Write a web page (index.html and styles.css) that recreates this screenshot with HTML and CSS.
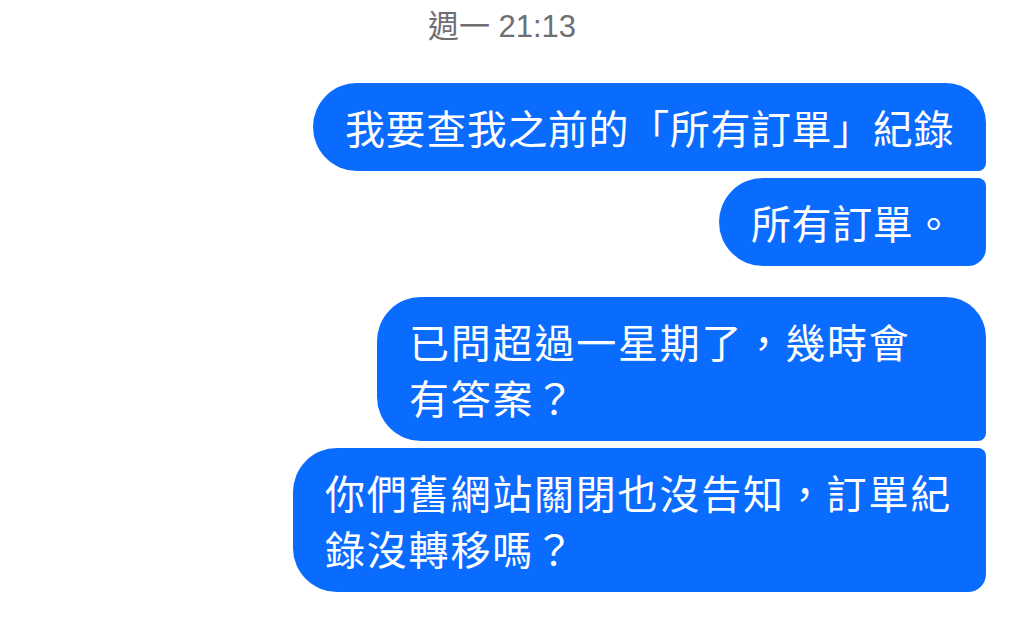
FILE: index.html
```html
<!DOCTYPE html>
<html lang="zh-Hant">
<head>
  <meta charset="UTF-8">
  <meta name="viewport" content="width=device-width, initial-scale=1.0">
  <title>Messages</title>
  <link rel="stylesheet" href="styles.css">
</head>
<body>
  <div class="timestamp">週一 21:13</div>
  <div class="chat">
    <div class="group">
      <div class="bubble first">我要查我之前的「所有訂單」紀錄</div>
      <div class="bubble last">所有訂單。</div>
    </div>
    <div class="group">
      <div class="bubble first wide">已問超過一星期了，幾時會<br>有答案？</div>
      <div class="bubble last full">你們舊網站關閉也沒告知，訂單紀<br>錄沒轉移嗎？</div>
    </div>
  </div>
</body>
</html>
```

FILE: styles.css
```css
body {
  margin: 0;
  background-color: #ffffff;
  font-family: "Noto Sans CJK TC", "Noto Sans", sans-serif;
}

.timestamp {
  padding: 7px 20px 0 0;
  height: 40px;
  line-height: 40px;
  text-align: center;
  font-family: "Liberation Sans", "Noto Sans CJK TC", sans-serif;
  font-size: 31px;
  color: #6e6e73;
}

.chat {
  display: flex;
  flex-direction: column;
  align-items: flex-end;
  gap: 31px;
  padding: 36px 38px 0 0;
}

.group {
  display: flex;
  flex-direction: column;
  align-items: flex-end;
  gap: 7px;
}

.bubble {
  background-color: #0a6bff;
  color: #ffffff;
  font-size: 40px;
  line-height: 56px;
  letter-spacing: 0.6px;
  padding: 16px 32px;
  white-space: nowrap;
}

.bubble.first {
  border-radius: 44px 40px 8px 44px;
}

.bubble.last {
  border-radius: 44px 8px 18px 44px;
}

.bubble.wide {
  width: 609px;
  box-sizing: border-box;
  letter-spacing: 1.8px;
}

.bubble.full {
  width: 693px;
  box-sizing: border-box;
  letter-spacing: 1.8px;
}
```
